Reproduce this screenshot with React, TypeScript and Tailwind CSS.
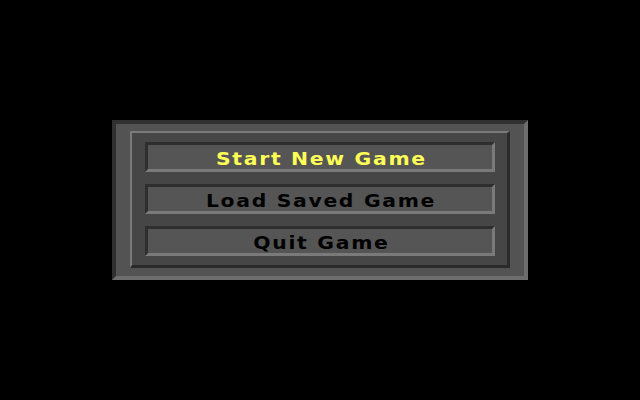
import React from "react";

const items = [
  { label: "Start New Game", active: true },
  { label: "Load Saved Game", active: false },
  { label: "Quit Game", active: false },
];

export default function App() {
  return (
    <div className="w-[640px] h-[400px] bg-black flex items-center justify-center">
      <div className="w-[416px] h-[160px] border-4 border-t-[#303030] border-l-[#303030] border-b-[#6e6e6e] border-r-[#6e6e6e] bg-[#535353] pt-[7px] pb-[8px] px-[14px] flex">
        <div className="flex-1 border-t-2 border-l-2 border-t-[#7a7a7a] border-l-[#7a7a7a] border-r-[3px] border-b-[3px] border-r-[#2a2a2a] border-b-[#2a2a2a] bg-[#464646] pt-[9px] pb-[9px] pl-[13px] pr-[12px] flex flex-col gap-[12px]">
          {items.map((it) => (
            <div
              key={it.label}
              className="h-[30px] border-[3px] border-t-[#2e2e2e] border-l-[#2e2e2e] border-b-[#7a7a7a] border-r-[#7a7a7a] bg-[#555555] flex items-center justify-center"
            >
              <span
                className={
                  "inline-block scale-x-[1.13] pt-[3px] pl-[2px] leading-none text-[18px] font-bold tracking-[1.5px] " +
                  (it.active ? "text-[#ffff55]" : "text-black")
                }
                style={{ fontFamily: '"DejaVu Sans", "Liberation Sans", sans-serif' }}
              >
                {it.label}
              </span>
            </div>
          ))}
        </div>
      </div>
    </div>
  );
}
